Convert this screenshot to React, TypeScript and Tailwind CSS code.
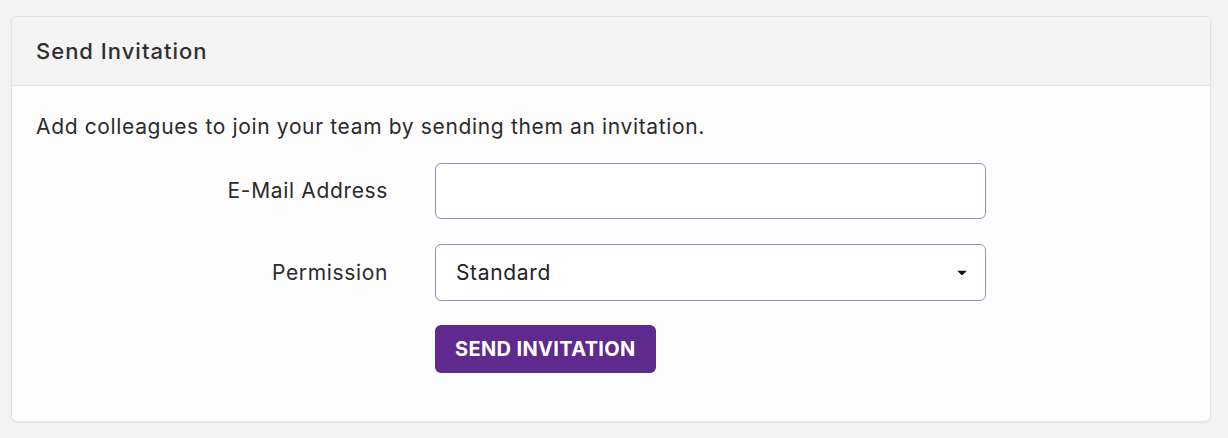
import { useState } from 'react';

const SendInvitation = () => {
  const [email, setEmail] = useState('');
  const [permission, setPermission] = useState('standard');

  return (
    <div className="rounded-md border border-[#e2e2e2] bg-[#fdfdfd] shadow-[0_1px_2px_rgba(0,0,0,0.06)]">
      <div className="h-[69px] flex items-center px-[24px] bg-[#f4f4f4] border-b border-[#e2e2e2] rounded-t-md">
        <h2 className="text-[22px] font-medium tracking-[1px] text-[#2f2f2f]">Send Invitation</h2>
      </div>
      <div className="px-[24px] pt-[25px] pb-[48px] text-[21px] tracking-[0.65px] text-[#2b2b2b]">
        <p className="leading-8 mb-5">
          Add colleagues to join your team by sending them an invitation.
        </p>
        <form className="space-y-[25px]" onSubmit={(e) => e.preventDefault()}>
          <div className="flex items-center">
            <label className="w-[352px] text-right">E-Mail Address</label>
            <input
              type="email"
              value={email}
              onChange={(e) => setEmail(e.target.value)}
              className="ml-[47px] w-[551px] h-[56px] rounded-md border border-[#958fb4] bg-white px-5 outline-none"
            />
          </div>
          <div className="flex items-center">
            <label className="w-[352px] text-right">Permission</label>
            <div className="ml-[47px] relative w-[551px] h-[57px]">
              <select
                value={permission}
                onChange={(e) => setPermission(e.target.value)}
                className="appearance-none w-full h-full rounded-md border border-[#958fb4] bg-white pl-5 pr-10 text-[#222] outline-none"
              >
                <option value="standard">Standard</option>
                <option value="admin">Administrator</option>
              </select>
              <svg
                className="pointer-events-none absolute right-[19px] top-1/2 -translate-y-1/2"
                width="10"
                height="5"
                viewBox="0 0 10 5"
              >
                <path d="M0 0h10L5 5z" fill="#111" />
              </svg>
            </div>
          </div>
          <div className="pl-[399px] -mt-[1px]">
            <button
              type="submit"
              className="h-[48px] px-5 rounded-md bg-[#5f2a8d] text-white text-[20px] font-bold tracking-[0.35px] uppercase"
            >
              Send Invitation
            </button>
          </div>
        </form>
      </div>
    </div>
  );
};

export default function App() {
  return (
    <div className="min-h-screen bg-[#f3f3f3] pt-4 pl-[11px] pr-[17px] font-['Inter',sans-serif]">
      <SendInvitation />
    </div>
  );
}
